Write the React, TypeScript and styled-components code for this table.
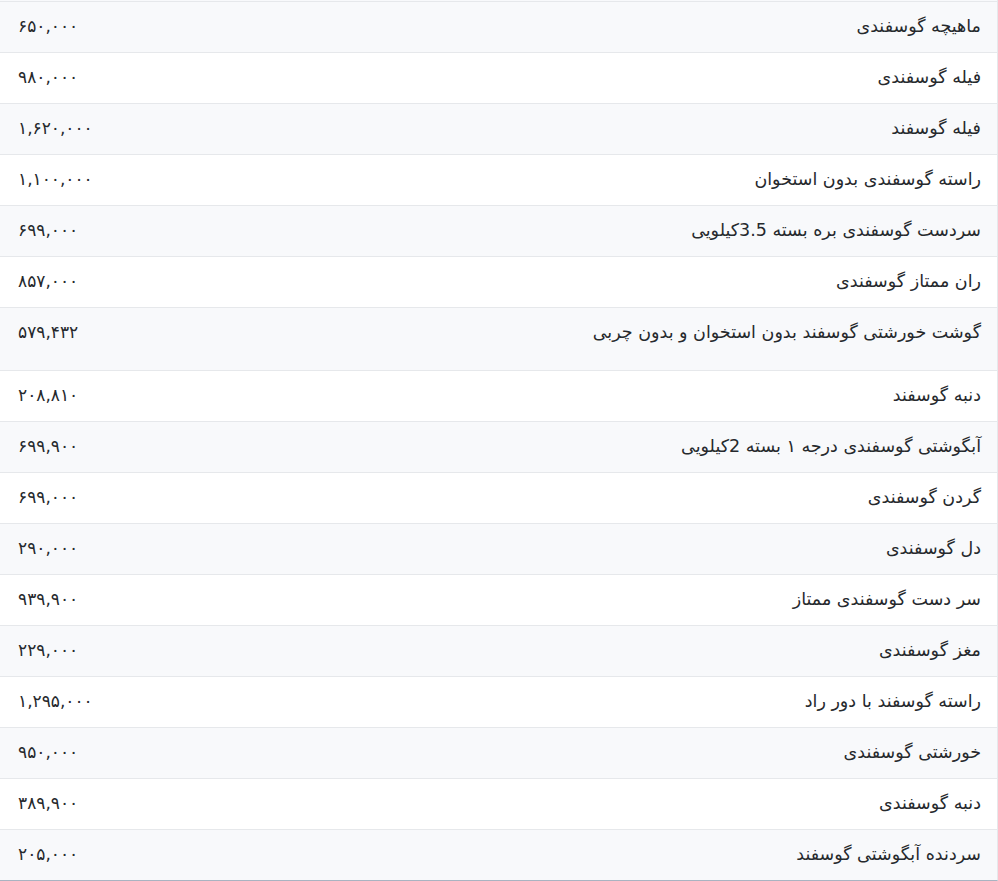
import React from "react";
import styled, { createGlobalStyle } from "styled-components";

const GlobalStyle = createGlobalStyle`
  html, body {
    margin: 0;
    padding: 0;
    background: #fff;
  }
`;

const colors = {
  text: "#26292d",
  stripe: "#f8f9fb",
  border: "#e6e8eb",
  edge: "#a9b3c1",
};

type Item = { name: string; price: string; tall?: boolean };

const items: Item[] = [
  { name: "ماهیچه گوسفندی", price: "۶۵۰,۰۰۰" },
  { name: "فیله گوسفندی", price: "۹۸۰,۰۰۰" },
  { name: "فیله گوسفند", price: "۱,۶۲۰,۰۰۰" },
  { name: "راسته گوسفندی بدون استخوان", price: "۱,۱۰۰,۰۰۰" },
  { name: "سردست گوسفندی بره بسته 3.5کیلویی", price: "۶۹۹,۰۰۰" },
  { name: "ران ممتاز گوسفندی", price: "۸۵۷,۰۰۰" },
  { name: "گوشت خورشتی گوسفند بدون استخوان و بدون چربی", price: "۵۷۹,۴۳۲", tall: true },
  { name: "دنبه گوسفند", price: "۲۰۸,۸۱۰" },
  { name: "آبگوشتی گوسفندی درجه ۱ بسته 2کیلویی", price: "۶۹۹,۹۰۰" },
  { name: "گردن گوسفندی", price: "۶۹۹,۰۰۰" },
  { name: "دل گوسفندی", price: "۲۹۰,۰۰۰" },
  { name: "سر دست گوسفندی ممتاز", price: "۹۳۹,۹۰۰" },
  { name: "مغز گوسفندی", price: "۲۲۹,۰۰۰" },
  { name: "راسته گوسفند با دور راد", price: "۱,۲۹۵,۰۰۰" },
  { name: "خورشتی گوسفندی", price: "۹۵۰,۰۰۰" },
  { name: "دنبه گوسفندی", price: "۳۸۹,۹۰۰" },
  { name: "سردنده آبگوشتی گوسفند", price: "۲۰۵,۰۰۰" },
];

const PriceTable = styled.div`
  direction: rtl;
  box-sizing: border-box;
  width: 998px;
  padding-top: 1px;
  background: ${colors.stripe};
  border-right: 1px solid ${colors.border};
  border-bottom: 1px solid ${colors.edge};
  font-family: "DejaVu Sans", "Noto Sans", sans-serif;
  color: ${colors.text};
`;

const Row = styled.div<{ $striped: boolean; $tall?: boolean }>`
  display: grid;
  grid-template-columns: 1fr auto;
  align-items: start;
  box-sizing: border-box;
  height: ${(p) => (p.$tall ? 63 : 51)}px;
  padding: 11px 16px 0 18px;
  border-top: 1px solid ${colors.border};
  background: ${(p) => (p.$striped ? colors.stripe : "#fff")};
`;

const Name = styled.span`
  font-size: 17.5px;
  line-height: 26px;
  white-space: nowrap;
`;

const Price = styled.span`
  font-size: 17px;
  line-height: 26px;
  white-space: nowrap;
`;

export default function App() {
  return (
    <>
      <GlobalStyle />
      <PriceTable>
        {items.map((item, i) => (
          <Row key={i} $striped={i % 2 === 0} $tall={item.tall}>
            <Name>{item.name}</Name>
            <Price>{item.price}</Price>
          </Row>
        ))}
      </PriceTable>
    </>
  );
}
